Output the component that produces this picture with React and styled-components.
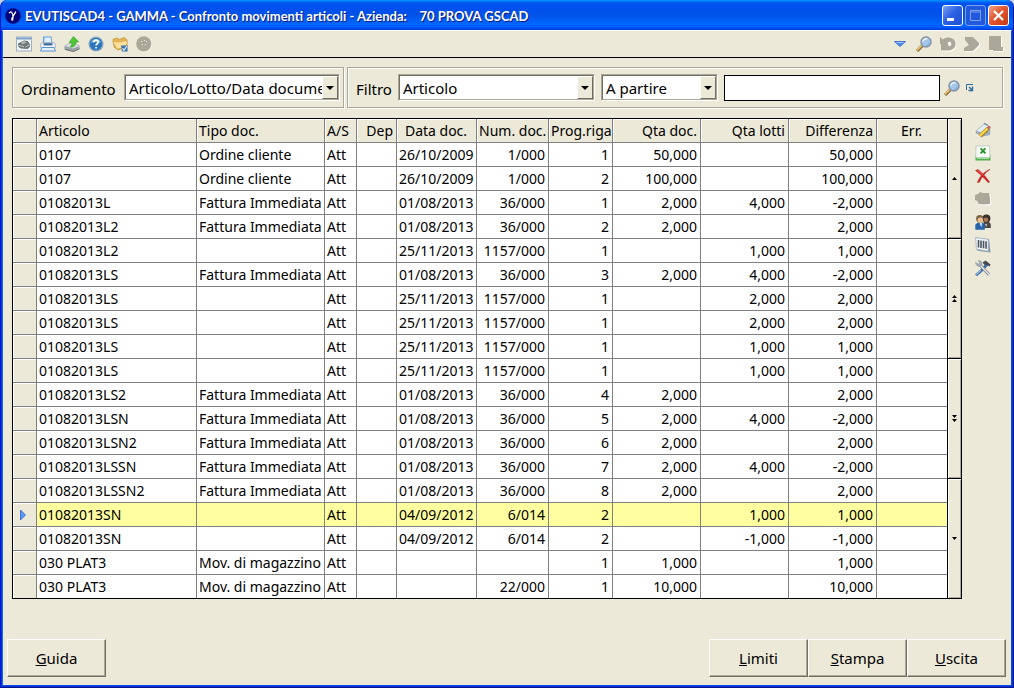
import React, { useState } from "react";
import styled, { createGlobalStyle, css } from "styled-components";

const GlobalStyle = createGlobalStyle`
  * {
    box-sizing: border-box;
  }
  body {
    margin: 0;
    background: #c3d3f0;
    color: #000;
    font-family: Tahoma, "Noto Sans", "Open Sans", sans-serif;
    font-size: 14px;
  }
  button, input, select {
    font-family: inherit;
    color: inherit;
  }
`;

const Window = styled.div`
  display: flex;
  flex-direction: column;
  min-height: 100vh;
  overflow: hidden;
  border: solid;
  border-width: 0 1px 1px;
  border-color: #001ea0 #001590 #001590 #0019cf;
  border-radius: 7px 7px 0 0;
  background: #0831d9;
`;

const TitleBar = styled.header`
  display: flex;
  align-items: center;
  gap: 4px;
  height: 30px;
  padding: 1px 4px 0;
  border-radius: 6px 6px 0 0;
  background: linear-gradient(
    #0997ff 0,
    #0053ee 10%,
    #0050ee 30%,
    #0053e6 50%,
    #0066ff 80%,
    #005bff 90%,
    #003dd7 100%
  );
`;

const Title = styled.h1`
  flex: 1;
  margin: 0;
  font-family: "Trebuchet MS", Lato, "Open Sans", sans-serif;
  font-size: 13px;
  font-weight: 700;
  color: #fff;
  white-space: pre;
  text-shadow: 1px 1px 0 #0a1883;
`;

const Controls = styled.div`
  display: flex;
  gap: 2px;
`;

const ControlButton = styled.button`
  display: block;
  width: 21px;
  height: 21px;
  padding: 0;
  border: 1px solid ${(props) => (props.$dim ? "#7f9fec" : "#fff")};
  border-radius: 3px;
  background: ${(props) =>
    props.$close
      ? "linear-gradient(135deg, #f0a58c, #e3562f 45%, #c63a10)"
      : props.$dim
        ? "#2059dd"
        : "linear-gradient(135deg, #7ea3f5, #2c62e4 45%, #1c4ed0)"};
  svg {
    display: block;
  }
`;

const Client = styled.main`
  flex: 1;
  display: flex;
  flex-direction: column;
  margin: 0 1px 1px;
  border: 1px solid;
  border-color: #fff #0a4be0 #0a4be0 #166aee;
  background: #ece9d8;
`;

const Toolbar = styled.div`
  display: flex;
  justify-content: space-between;
  height: 27px;
  padding: 5px 7px 0 13px;
  border-bottom: 1px solid #000;
`;

const ToolGroup = styled.div`
  display: flex;
  gap: 8px;
`;

const IconButton = styled.button`
  display: block;
  width: 16px;
  height: 16px;
  padding: 0;
  border: none;
  background: none;
  svg {
    display: block;
  }
`;

const Filters = styled.div`
  display: flex;
  gap: 3px;
  padding: 9px 8px 0 9px;
`;

const FilterBox = styled.div`
  display: flex;
  align-items: center;
  gap: 6px;
  flex: ${(props) => (props.$grow ? "1" : "0 0 332px")};
  height: 41px;
  padding: 0 3px 0 8px;
  border: 1px solid #aca899;
  box-shadow: 1px 1px 0 #fff, inset 1px 1px 0 #fff;
`;

const Label = styled.label`
  flex: 1;
  font-size: 15px;
  padding-top: 3px;
  ${(props) => props.$fit && "flex: none;"}
`;

const SelectBox = styled.div`
  display: grid;
  flex: 0 0 ${(props) => props.$w}px;
  height: 27px;
  border: 1px solid;
  border-color: #aca899 #fff #fff #aca899;
`;

const Select = styled.select`
  grid-area: 1 / 1;
  width: 100%;
  min-width: 0;
  height: 25px;
  padding: 0 16px 0 3px;
  border: 1px solid;
  border-color: #716f64 #aca899 #aca899 #716f64;
  border-radius: 0;
  outline: none;
  appearance: none;
  background: #fff;
  font-size: 15px;
`;

const Arrow = styled.span`
  grid-area: 1 / 1;
  justify-self: end;
  display: flex;
  align-items: center;
  justify-content: center;
  width: 16px;
  height: 23px;
  margin: 1px;
  border: 1px solid;
  border-color: #fff #716f64 #716f64 #fff;
  background: #ece9d8;
  pointer-events: none;
  &::after {
    content: "";
    border: 4px solid transparent;
    border-top-color: #000;
    border-bottom: none;
  }
`;

const SearchInput = styled.input`
  flex: 0 1 216px;
  min-width: 0;
  height: 26px;
  padding: 0 3px;
  border: 1px solid #000;
  border-radius: 0;
  outline: none;
  background: #fff;
  font-size: 15px;
`;

const SearchTools = styled.div`
  display: flex;
  align-items: center;
  gap: 6px;
  margin-left: -2px;
`;

const Body = styled.div`
  display: flex;
  gap: 13px;
  padding: 10px 20px 0 9px;
`;

const GridFrame = styled.div`
  flex: 1;
  display: flex;
  min-width: 0;
  border: 1px solid #000;
`;

const Table = styled.table`
  flex: 1;
  min-width: 0;
  width: 100%;
  table-layout: fixed;
  border-collapse: separate;
  border-spacing: 0;
  background: #fff;
`;

const cell = css`
  height: 24px;
  padding: 0 3px 0 2px;
  border-right: 1px solid #808080;
  border-bottom: 1px solid #808080;
  overflow: hidden;
  white-space: nowrap;
  line-height: 20px;
  text-align: ${(props) => props.$align || "left"};
  font-weight: 400;
  &:last-child {
    border-right: none;
  }
`;

const Th = styled.th`
  ${cell}
  background: #ece9d8;
  box-shadow: inset 1px 1px 0 #fff;
`;

const RowHead = styled(Th)`
  svg {
    display: block;
    margin-left: 4px;
  }
`;

const Td = styled.td`
  ${cell}
`;

const Row = styled.tr`
  background: ${(props) => (props.$active ? "#ffff9f" : "#fff")};
  &:last-child > * {
    height: 23px;
    border-bottom: none;
  }
`;

const Scroller = styled.div`
  display: flex;
  flex-direction: column;
  width: 14px;
  border-left: 1px solid #000;
`;

const ScrollButton = styled.button`
  flex: 1;
  display: flex;
  align-items: center;
  justify-content: center;
  padding: 0;
  border: none;
  border-bottom: 1px solid #000;
  background: #ece9d8;
  box-shadow: inset 1px 1px 0 #fff, inset -1px -1px 0 #aca899;
  &:last-child {
    border-bottom: none;
  }
`;

const SideTools = styled.div`
  display: flex;
  flex-direction: column;
  gap: 7px;
  padding-top: 4px;
`;

const Footer = styled.footer`
  display: flex;
  justify-content: space-between;
  margin-top: auto;
  padding: 0 5px 8px 4px;
`;

const FooterGroup = styled.div`
  display: flex;
`;

const PushButton = styled.button`
  width: 99px;
  height: 38px;
  padding: 0;
  border: 1px solid;
  border-color: #fff #716f64 #716f64 #fff;
  border-radius: 0;
  background: #ece9d8;
  box-shadow: inset -1px -1px 0 #aca899;
  font-size: 15px;
  &::first-letter {
    text-decoration: underline;
  }
`;

const Svg = ({ size = 16, children }) => (
  <svg width={size} height={size} viewBox={`0 0 ${size} ${size}`} aria-hidden="true">
    {children}
  </svg>
);

const LogoIcon = () => (
  <Svg>
    <circle cx="8" cy="8" r="7.7" fill="#00007c" />
    <path d="M4 5.2C5.6 2.6 8.2 4.2 8 9.5C7.8 13 6.6 13 7 10.5C7.4 8.6 9.8 6 10.8 3.6" fill="none" stroke="#fff" strokeWidth="1.3" />
  </Svg>
);

const PreviewIcon = () => (
  <Svg>
    <rect x="0.5" y="1" width="15" height="14" fill="#f1f4f8" stroke="#9fb0c2" />
    <rect x="1" y="1.5" width="14" height="2" fill="#7fa3cc" />
    <path d="M2 7.5L5 6L8 4.5L11.5 5L13.8 8V11L11.5 13L5 12.5L2.5 11Z" fill="#6f7476" />
    <path d="M5 6.5L8.5 5L10.5 6.6L6.5 8.4Z" fill="#b4b9bb" />
    <path d="M3 9.4L8 10.8M9.5 11L13 9" stroke="#c2c7c9" />
  </Svg>
);

const PrintIcon = () => (
  <Svg>
    <path d="M3 0.5H11.5L12.5 7.5H3Z" fill="#5b9de6" />
    <path d="M4.3 1.5H10.8L11.5 7.5H4.3Z" fill="#e1efff" />
    <path d="M0.8 7.5L3 6.5H13L15.2 7.5V12H0.8Z" fill="#f3f4f6" stroke="#a9b4c2" />
    <rect x="3.5" y="7.2" width="9" height="2.2" fill="#35679f" />
    <path d="M2 11.5H14L15.5 15H0.5Z" fill="#e5f0fc" stroke="#5f92d0" />
  </Svg>
);

const ExportIcon = () => (
  <Svg>
    <path d="M0.5 10L4 7.5H12L15.5 10V13L9.5 15.8L0.5 13.5Z" fill="#9da2a8" />
    <path d="M1 10L9 12.5L15 10.2L12 8H4Z" fill="#d5d9dc" />
    <path d="M1 13.4L9.5 15.5L15.5 12.8" fill="none" stroke="#6c7278" />
    <path d="M6 11C8 10 8 8.5 7.8 6.5H5.2L9.5 0.6L14.4 5.8L11.6 6.2C12 9 10 11.4 6 11Z" fill="#4fc934" stroke="#2ba01f" strokeWidth="0.7" />
  </Svg>
);

const HelpIcon = () => (
  <Svg>
    <circle cx="8" cy="8" r="7.6" fill="#93aac2" />
    <circle cx="8" cy="8" r="6.3" fill="#2a75bd" />
    <path d="M2.6 7A5.6 5.6 0 0 1 13.4 7C10 5.6 6 5.6 2.6 7Z" fill="#6facdf" />
    <path d="M5.8 6.2C6 3.4 10.4 3.6 10.2 6.2C10 7.8 8.1 7.8 8.1 9.6M8.1 11V12.6" fill="none" stroke="#fff" strokeWidth="1.8" />
  </Svg>
);

const FolderIcon = () => (
  <Svg>
    <path d="M1 3.5L4.5 2L7.5 3.4L12.5 1.5L15 4V11L6 14L2 11Z" fill="#e6b650" stroke="#b98a32" strokeWidth="0.7" />
    <path d="M0.5 5.6L8 6L13.4 4.4L15.4 6.5L13 12L5 13Z" fill="#fbe09a" stroke="#cf9f43" strokeWidth="0.6" />
    <path d="M9 9.5H15.5V15.5H10Z" fill="#386fb0" />
    <path d="M10.5 12L12 14.4L14.8 10" fill="none" stroke="#e4effa" strokeWidth="1.1" />
  </Svg>
);

const BallIcon = () => (
  <Svg>
    <circle cx="8.6" cy="8.6" r="7.4" fill="#fff" />
    <circle cx="7.8" cy="7.8" r="7.6" fill="#aca899" />
    <path d="M5 5.5H6M8 4.5H9M10 5.5H11M6 8.5H7M9 8.5H10" stroke="#ece9d8" />
  </Svg>
);

const TriangleIcon = () => (
  <Svg>
    <path d="M2.5 5.5H13.5L8 10.5Z" fill="#4d8af0" stroke="#2b5fc6" strokeWidth="0.8" />
    <path d="M4 6H12L11 7H5Z" fill="#a8c9fb" />
  </Svg>
);

const SearchIcon = () => (
  <Svg>
    <path d="M1 15L7 9" stroke="#8f7440" strokeWidth="3.2" />
    <path d="M0.8 14.2L6.2 9" stroke="#ecc878" strokeWidth="1.6" />
    <circle cx="10" cy="6" r="5" fill="#a4c6ea" stroke="#8291a6" strokeWidth="1.4" />
    <path d="M6.9 5.6C7.4 3.4 9.4 2.4 11.4 2.8" fill="none" stroke="#e8f4ff" strokeWidth="1.5" />
    <path d="M13.2 6.5C13 8.2 11.6 9.4 10 9.3" fill="none" stroke="#7fb0e2" strokeWidth="1.2" />
  </Svg>
);

const undoPath = "M0 1L3 3.4C7 0 15.5 1.2 15.5 8C15.5 13 11 14.5 8 14.5H1V8H0Z";
const UndoIcon = () => (
  <Svg>
    <path d={undoPath} fill="#fff" transform="translate(1 1)" />
    <path d={undoPath} fill="#aca899" />
    <path d="M7.5 6.5L10.5 5.5L11.5 9L9 10.5Z" fill="#fff" />
  </Svg>
);

const redoPath = "M1 1H9L15 7V9L9 15H0V12L5 9L1 4Z";
const ForwardIcon = () => (
  <Svg>
    <path d={redoPath} fill="#fff" transform="translate(1 1)" />
    <path d={redoPath} fill="#aca899" />
  </Svg>
);

const ExitIcon = () => (
  <Svg>
    <path d="M2 1H14V12H16V16H6V15H2Z" fill="#fff" />
    <path d="M1 0H13V11H15V15H5V14H1Z" fill="#aca899" />
  </Svg>
);

const ExpandIcon = () => (
  <Svg size={8}>
    <path d="M0.5 6V0.5H7" fill="none" stroke="#31699c" />
    <path d="M3 3L6 6M6.5 2.5V6.5H2.5" fill="none" stroke="#31699c" strokeWidth="1.4" />
  </Svg>
);

const EditIcon = () => (
  <Svg>
    <path d="M0.5 9L8 2.5L10 0.8L15.5 5L15 13L8 14.5L1 11.5Z" fill="#9fadbb" />
    <path d="M1.5 8.8L9 2.4L13 4L6.5 10.5Z" fill="#e5edf4" />
    <path d="M9 1.5L13 3.2" stroke="#7d8a98" />
    <path d="M5 14L13 6.4" stroke="#a97f1b" strokeWidth="4" />
    <path d="M5 13.6L13 6" stroke="#ffd84d" strokeWidth="2.4" />
    <path d="M12.6 6.6L15 4.4" stroke="#b9685c" strokeWidth="2.4" />
  </Svg>
);

const ExcelIcon = () => (
  <Svg>
    <path d="M0.5 10H15.5V15.5H0.5Z" fill="#4fae4a" />
    <path d="M1 1L14.5 0.8L15 12.5H0.8Z" fill="#f7fbf7" stroke="#b5cdb5" strokeWidth="0.8" />
    <path d="M5.6 3.4L10.4 8.4M10.4 3.4L5.6 8.4" stroke="#249326" strokeWidth="1.8" />
    <path d="M2 13.5H14" stroke="#a8dba2" />
  </Svg>
);

const DeleteIcon = () => (
  <Svg>
    <path d="M0.5 2.5L3 1.5C7 4.5 11 9 14.5 14L13.4 14.8C9.5 10.5 5 6 0.5 2.5Z" fill="#d62424" stroke="#b01818" strokeWidth="0.5" />
    <path d="M15 1.4C10 4.6 6.6 9 4.4 14.2L2.4 14.6C4.5 8.6 9 3.6 15 1.4Z" fill="#d62424" stroke="#b01818" strokeWidth="0.5" />
    <path d="M2.4 2.6C5 4 7 6 8.5 7.5" fill="none" stroke="#f07a70" strokeWidth="0.9" />
  </Svg>
);

const shapePath = "M0 4L3 3L5 1L8 2H14L15 7V13L9 13.5L4 13L2 10L0 9Z";
const PanelIcon = () => (
  <Svg>
    <path d={shapePath} fill="#fff" transform="translate(1 1)" />
    <path d={shapePath} fill="#aca899" />
  </Svg>
);

const UsersIcon = () => (
  <Svg>
    <path d="M8.5 8H14L15.8 10V14H8.5Z" fill="#4a4642" />
    <circle cx="11.4" cy="4.4" r="4" fill="#3b3029" />
    <circle cx="10.9" cy="5.8" r="2.3" fill="#a97855" />
    <path d="M0.3 10.5L3 8.5H7.6L9.8 11V15.8H0.3Z" fill="#2865ad" />
    <circle cx="4.8" cy="4.8" r="3.7" fill="#7a6544" />
    <circle cx="5.3" cy="6.2" r="2.7" fill="#e8bd8f" />
    <path d="M4.8 9.2L7 9L6.4 13.4Z" fill="#f4f4f4" />
    <path d="M10 10L12 9.8L11.4 13Z" fill="#d8d8d8" />
  </Svg>
);

const BarcodeIcon = () => (
  <Svg>
    <path d="M0.5 0.5L14 2L15.5 15.5L2.5 13.8Z" fill="#8194a8" />
    <path d="M0.6 0.6L13.2 2.2V14.2L1.4 12.2Z" fill="#f0f3f6" stroke="#a4b4c4" strokeWidth="0.8" />
    <path d="M3.5 3V10.5M6 3.4V10.9M8.5 3.8V11.3M11 4.2V11.7" stroke="#4a5561" strokeWidth="1.6" />
  </Svg>
);

const ToolsIcon = () => (
  <Svg>
    <path d="M1 15.2L6 11L12.5 4" fill="none" stroke="#3c6da6" strokeWidth="2.8" />
    <path d="M1.2 14.6L6 10.4" stroke="#a9c2dd" strokeWidth="1.2" />
    <path d="M7.5 2.6L10.5 0.6L15.6 4.5L14.4 6.4L11.8 4.6L10 5.6Z" fill="#454b50" />
    <path d="M4 4L14 14.6" stroke="#7e8990" strokeWidth="3" />
    <path d="M4 4L14 14.6" stroke="#e4e9ec" strokeWidth="1.4" />
    <path d="M0.6 2.2L3.3 4.3L4.8 3L3.2 0.6C6.8 0.4 7.6 3.8 6.2 5.8C4 7.4 0.4 5.6 0.6 2.2Z" fill="#a5b0b7" stroke="#848f96" strokeWidth="0.5" />
  </Svg>
);

const columns = [
  { key: "articolo", label: "Articolo", width: 160 },
  { key: "tipo", label: "Tipo doc.", width: 128 },
  { key: "as", label: "A/S", width: 32 },
  { key: "dep", label: "Dep", width: 40, align: "right" },
  { key: "data", label: "Data doc.", width: 80, align: "center" },
  { key: "num", label: "Num. doc.", width: 72, align: "right" },
  { key: "riga", label: "Prog.riga", width: 64, align: "right" },
  { key: "qta", label: "Qta doc.", width: 88, align: "right" },
  { key: "lotti", label: "Qta lotti", width: 88, align: "right" },
  { key: "diff", label: "Differenza", width: 88, align: "right" },
  { key: "err", label: "Err.", align: "center" },
];

const FI = "Fattura Immediata";

const rows = [
  ["0107", "Ordine cliente", "Att", "", "26/10/2009", "1/000", "1", "50,000", "", "50,000", ""],
  ["0107", "Ordine cliente", "Att", "", "26/10/2009", "1/000", "2", "100,000", "", "100,000", ""],
  ["01082013L", FI, "Att", "", "01/08/2013", "36/000", "1", "2,000", "4,000", "-2,000", ""],
  ["01082013L2", FI, "Att", "", "01/08/2013", "36/000", "2", "2,000", "", "2,000", ""],
  ["01082013L2", "", "Att", "", "25/11/2013", "1157/000", "1", "", "1,000", "1,000", ""],
  ["01082013LS", FI, "Att", "", "01/08/2013", "36/000", "3", "2,000", "4,000", "-2,000", ""],
  ["01082013LS", "", "Att", "", "25/11/2013", "1157/000", "1", "", "2,000", "2,000", ""],
  ["01082013LS", "", "Att", "", "25/11/2013", "1157/000", "1", "", "2,000", "2,000", ""],
  ["01082013LS", "", "Att", "", "25/11/2013", "1157/000", "1", "", "1,000", "1,000", ""],
  ["01082013LS", "", "Att", "", "25/11/2013", "1157/000", "1", "", "1,000", "1,000", ""],
  ["01082013LS2", FI, "Att", "", "01/08/2013", "36/000", "4", "2,000", "", "2,000", ""],
  ["01082013LSN", FI, "Att", "", "01/08/2013", "36/000", "5", "2,000", "4,000", "-2,000", ""],
  ["01082013LSN2", FI, "Att", "", "01/08/2013", "36/000", "6", "2,000", "", "2,000", ""],
  ["01082013LSSN", FI, "Att", "", "01/08/2013", "36/000", "7", "2,000", "4,000", "-2,000", ""],
  ["01082013LSSN2", FI, "Att", "", "01/08/2013", "36/000", "8", "2,000", "", "2,000", ""],
  ["01082013SN", "", "Att", "", "04/09/2012", "6/014", "2", "", "1,000", "1,000", ""],
  ["01082013SN", "", "Att", "", "04/09/2012", "6/014", "2", "", "-1,000", "-1,000", ""],
  ["030 PLAT3", "Mov. di magazzino", "Att", "", "", "", "1", "1,000", "", "1,000", ""],
  ["030 PLAT3", "Mov. di magazzino", "Att", "", "", "22/000", "1", "10,000", "", "10,000", ""],
];

const leftTools = [
  ["Anteprima", PreviewIcon],
  ["Stampa", PrintIcon],
  ["Esporta", ExportIcon],
  ["Aiuto", HelpIcon],
  ["Cartella", FolderIcon],
  ["Globo", BallIcon],
];

const rightTools = [
  ["Menu", TriangleIcon],
  ["Cerca", SearchIcon],
  ["Annulla", UndoIcon],
  ["Avanti", ForwardIcon],
  ["Esci", ExitIcon],
];

const sideTools = [
  ["Modifica", EditIcon],
  ["Excel", ExcelIcon],
  ["Elimina", DeleteIcon],
  ["Pannello", PanelIcon],
  ["Utenti", UsersIcon],
  ["Codice a barre", BarcodeIcon],
  ["Strumenti", ToolsIcon],
];

const scrollButtons = [
  ["Riga su", "M1 5H6L3.5 2Z"],
  ["Pagina su", "M1 3H6L3.5 0ZM1 7H6L3.5 4Z"],
  ["Pagina giù", "M1 0H6L3.5 3ZM1 4H6L3.5 7Z"],
  ["Riga giù", "M1 2H6L3.5 5Z"],
];

const Tools = ({ items }) =>
  items.map(([label, Icon]) => (
    <IconButton key={label} type="button" aria-label={label}>
      <Icon />
    </IconButton>
  ));

const Combo = ({ id, width, value, label }) => (
  <SelectBox $w={width}>
    <Select id={id} aria-label={label} defaultValue={value}>
      <option>{value}</option>
    </Select>
    <Arrow />
  </SelectBox>
);

const App = () => {
  const [active, setActive] = useState(15);
  const [search, setSearch] = useState("");

  return (
    <>
      <GlobalStyle />
      <Window>
        <TitleBar>
          <LogoIcon />
          <Title>{"EVUTISCAD4 - GAMMA - Confronto movimenti articoli - Azienda:    70 PROVA GSCAD"}</Title>
          <Controls>
            <ControlButton type="button" aria-label="Riduci">
              <Svg size={19}>
                <path d="M4 12H11V15H4Z" fill="#fff" />
              </Svg>
            </ControlButton>
            <ControlButton type="button" aria-label="Ingrandisci" $dim>
              <Svg size={19}>
                <path d="M4.5 4.5H14.5V14.5H4.5ZM4 6H15" fill="none" stroke="#7f9fec" />
              </Svg>
            </ControlButton>
            <ControlButton type="button" aria-label="Chiudi" $close>
              <Svg size={19}>
                <path d="M5 5L14 14M14 5L5 14" stroke="#fff" strokeWidth="2.2" />
              </Svg>
            </ControlButton>
          </Controls>
        </TitleBar>
        <Client>
          <Toolbar>
            <ToolGroup>
              <Tools items={leftTools} />
            </ToolGroup>
            <ToolGroup>
              <Tools items={rightTools} />
            </ToolGroup>
          </Toolbar>
          <Filters>
            <FilterBox>
              <Label htmlFor="ordinamento">Ordinamento</Label>
              <Combo id="ordinamento" width={216} value="Articolo/Lotto/Data documento" />
            </FilterBox>
            <FilterBox $grow>
              <Label htmlFor="filtro" $fit>
                Filtro
              </Label>
              <Combo id="filtro" width={197} value="Articolo" />
              <Combo id="criterio" label="Criterio" width={117} value="A partire" />
              <SearchInput
                aria-label="Valore"
                value={search}
                onChange={(e) => setSearch(e.target.value)}
              />
              <SearchTools>
                <IconButton type="button" aria-label="Cerca articolo">
                  <SearchIcon />
                </IconButton>
                <IconButton type="button" aria-label="Espandi">
                  <ExpandIcon />
                </IconButton>
              </SearchTools>
            </FilterBox>
          </Filters>
          <Body>
            <GridFrame>
              <Table>
                <colgroup>
                  <col width={24} />
                  {columns.map((c) => (
                    <col key={c.key} width={c.width} />
                  ))}
                </colgroup>
                <thead>
                  <tr>
                    <Th aria-label="Selezione" />
                    {columns.map((c) => (
                      <Th key={c.key} scope="col" $align={c.align}>
                        {c.label}
                      </Th>
                    ))}
                  </tr>
                </thead>
                <tbody>
                  {rows.map((row, i) => (
                    <Row key={i} $active={i === active} onClick={() => setActive(i)}>
                      <RowHead scope="row">
                        {i === active && (
                          <svg width="8" height="12" viewBox="0 0 8 12" aria-hidden="true">
                            <path d="M1.5 1L6.5 6L1.5 11Z" fill="#5b9bf5" stroke="#2c62c8" strokeWidth="0.8" />
                          </svg>
                        )}
                      </RowHead>
                      {row.map((value, j) => (
                        <Td key={columns[j].key} $align={columns[j].align}>
                          {value}
                        </Td>
                      ))}
                    </Row>
                  ))}
                </tbody>
              </Table>
              <Scroller>
                {scrollButtons.map(([label, d]) => (
                  <ScrollButton key={label} type="button" aria-label={label}>
                    <svg width="7" height="7" viewBox="0 0 7 7" aria-hidden="true">
                      <path d={d} />
                    </svg>
                  </ScrollButton>
                ))}
              </Scroller>
            </GridFrame>
            <SideTools>
              <Tools items={sideTools} />
            </SideTools>
          </Body>
          <Footer>
            <PushButton type="button">Guida</PushButton>
            <FooterGroup>
              <PushButton type="button">Limiti</PushButton>
              <PushButton type="button">Stampa</PushButton>
              <PushButton type="button">Uscita</PushButton>
            </FooterGroup>
          </Footer>
        </Client>
      </Window>
    </>
  );
};

export default App;
